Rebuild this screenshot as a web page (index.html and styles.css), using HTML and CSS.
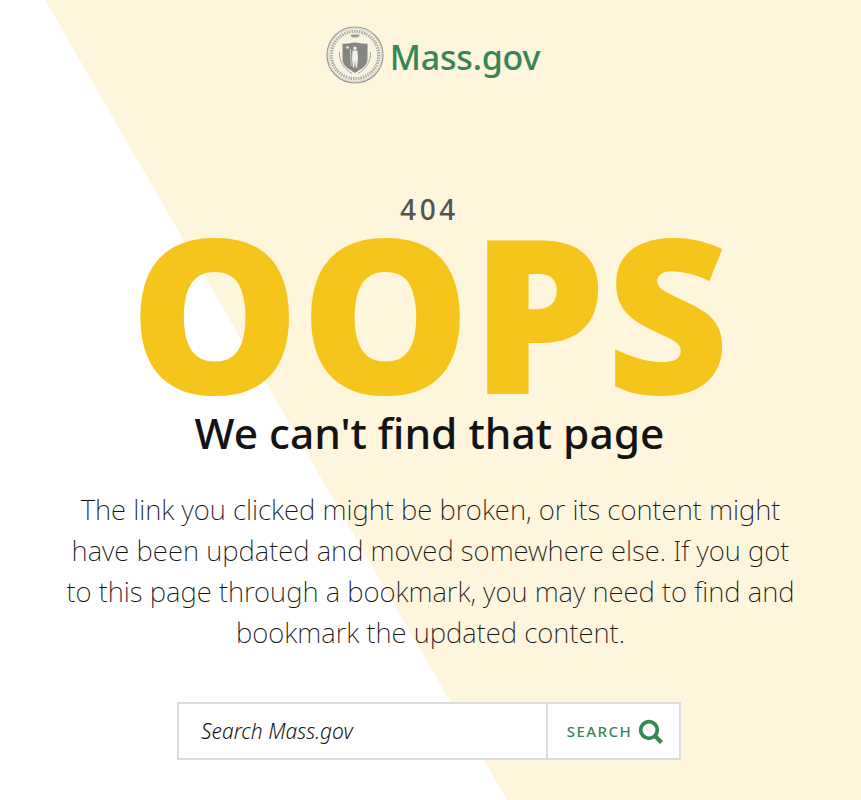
FILE: index.html
```html
<!DOCTYPE html>
<html lang="en">
<head>
<meta charset="utf-8">
<title>404 | Mass.gov</title>
<link rel="stylesheet" href="styles.css">
</head>
<body>
<div class="page">
  <a class="logo" href="#">
    <svg class="seal" viewBox="0 0 58 58" width="58" height="58" aria-hidden="true">
      <circle cx="29" cy="29" r="28" fill="#f9f3e1" stroke="#9b9b96" stroke-width="1.200"/>
      <circle cx="29" cy="29" r="26.600" fill="none" stroke="#c4c3bc" stroke-width=".6"/>
      <circle cx="29" cy="29" r="23.700" fill="none" stroke="#aeada7" stroke-width="3.200" stroke-dasharray="1.500 1"/>
      <path d="M16.500 17.500 C20 18.500 25 16.500 29 16.500 C33 16.500 38 18.500 41.500 17.500 V33 C41.500 40 35 43 29 47 C23 43 16.500 40 16.500 33Z" fill="#858582"/>
      <path d="M13.500 26 C13 37 20 44 26 47.500 M44.500 26 C45 37 38 44 32 47.500" fill="none" stroke="#a3a29c" stroke-width="1"/>
      <path d="M25.500 8.500 H33 L33.500 10 L31 11.500 H27 L24.500 10Z" fill="#9a9993"/>
      <path d="M29 20.500 a1.700 1.700 0 1 1 -.01 0Z M26.600 24.500 H31.400 L32 32 L31.100 41.500 H29.700 L29 34 L28.300 41.500 H26.900 L26 32Z" fill="#f0efe8"/>
      <path d="M24.500 23 L25.200 40" stroke="#f0efe8" stroke-width=".7"/>
      <circle cx="21.500" cy="21.500" r="1.200" fill="#f0efe8"/>
    </svg>
    <span class="logo-text">Mass.gov</span>
  </a>
  <main class="content">
    <p class="code">404</p>
    <h1 class="oops">OOPS</h1>
    <h2 class="title">We can't find that page</h2>
    <p class="message">The link you clicked might be broken, or its content might have been updated and moved somewhere else. If you got to this page through a bookmark, you may need to find and bookmark the updated content.</p>
    <form class="search">
      <input class="search-input" type="text" placeholder="Search Mass.gov">
      <button class="search-button" type="button">
        <span>Search</span>
        <svg class="search-icon" viewBox="0 0 26 26" width="26" height="26" aria-hidden="true">
          <circle cx="11" cy="11" r="8.300" fill="none" stroke="currentColor" stroke-width="3.800"/>
          <path d="M16.500 16.500 L23.500 23.500" stroke="currentColor" stroke-width="4.200" fill="none"/>
        </svg>
      </button>
    </form>
  </main>
</div>
</body>
</html>
```
FILE: styles.css
```css
* { box-sizing: border-box; }
html, body { margin: 0; padding: 0; }
body {
  background: #fff;
  color: #141414;
  font-family: "Noto Sans", "Open Sans", sans-serif;
  height: 800px;
  overflow: hidden;
}
.page {
  position: relative;
  height: 800px;
  display: flex;
  flex-direction: column;
  align-items: center;
  padding-top: 26px;
}
.page::before {
  content: "";
  position: absolute;
  inset: 0;
  background: #fdf5dc;
  clip-path: polygon(45px 0, 100% 0, 100% 100%, 507px 100%);
}
.logo, .content { position: relative; }
.logo {
  display: flex;
  align-items: center;
  gap: 6px;
  height: 58px;
  margin-left: 5px;
  text-decoration: none;
}
.logo-text {
  color: #388557;
  font-size: 34px;
  font-weight: 500;
  letter-spacing: -0.2px;
  padding-top: 4px;
}
.content {
  display: flex;
  flex-direction: column;
  align-items: center;
  width: 100%;
}
.code {
  margin: 106px 2px 0 0;
  color: #535353;
  font-size: 28px;
  font-weight: 500;
  letter-spacing: 3.600px;
  line-height: 38px;
}
.oops {
  margin: -22px 2px 0 0;
  color: #f6c51b;
  font-family: "Open Sans", sans-serif;
  font-size: 214px;
  font-weight: 800;
  line-height: 210px;
  letter-spacing: 0;
}
.title {
  margin: -11px 2px 0 0;
  font-size: 42.500px;
  font-weight: 500;
  line-height: 56px;
}
.message {
  margin: 28px 0 0;
  width: 738px;
  color: #141414;
  font-size: 27.600px;
  font-weight: 200;
  line-height: 41px;
  text-align: center;
}
.search {
  display: flex;
  width: 504px;
  height: 58px;
  margin: 49px 3px 0 0;
  border: 2px solid #dcdcdc;
  background: #fff;
}
.search-input {
  flex: 1;
  min-width: 0;
  border: 0;
  padding: 0 22px;
  font: italic 300 21px "Noto Sans", sans-serif;
  color: #141414;
  background: transparent;
}
.search-input::placeholder { color: #141414; opacity: 1; }
.search-button {
  display: flex;
  align-items: center;
  justify-content: center;
  gap: 6px;
  width: 133px;
  padding: 0 0 0 4px;
  border: 0;
  border-left: 2px solid #dcdcdc;
  background: #fff;
  color: #388557;
  font: 500 15px "Noto Sans", sans-serif;
  letter-spacing: 1.500px;
  text-transform: uppercase;
}
.search-icon { margin-top: 2px; }
```
